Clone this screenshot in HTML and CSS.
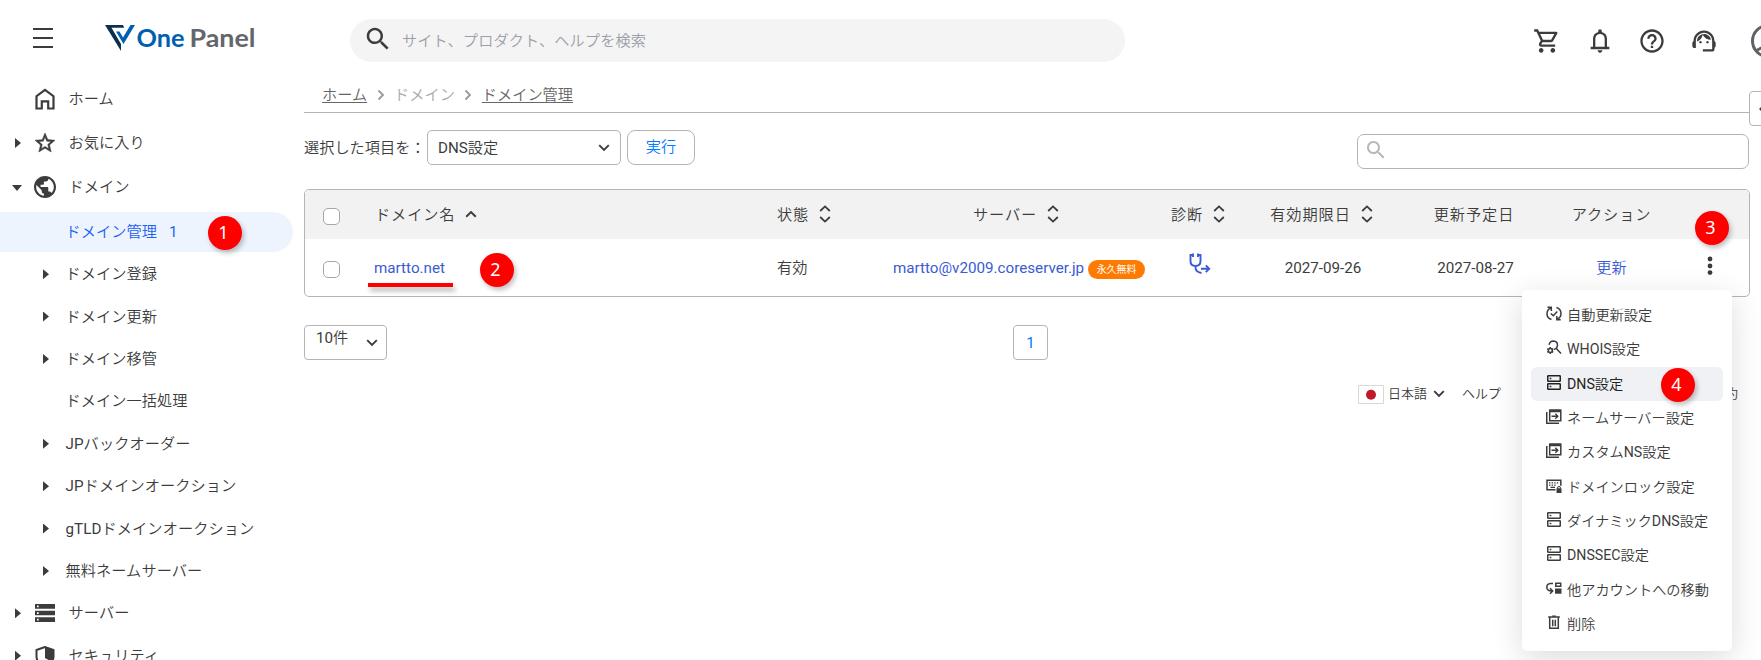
FILE: index.html
```html
<!DOCTYPE html>
<html lang="ja">
<head>
<meta charset="utf-8">
<title>One Panel</title>
<link rel="stylesheet" href="styles.css">
</head>
<body>
<svg class="defs" width="0" height="0">
  <symbol id="search" viewBox="0 0 24 24"><path d="M15.5 14h-.79l-.28-.27C15.41 12.59 16 11.11 16 9.5 16 5.91 13.09 3 9.5 3S3 5.91 3 9.5 5.91 16 9.5 16c1.61 0 3.09-.59 4.23-1.57l.27.28v.79l5 4.99L20.49 19l-4.99-5zm-6 0C7.01 14 5 11.99 5 9.5S7.01 5 9.5 5 14 7.01 14 9.5 11.99 14 9.5 14z"/></symbol>
  <symbol id="down" viewBox="0 0 12 8"><path d="M1.2 1.2 6 6l4.800-4.800" fill="none" stroke="currentColor" stroke-width="1.900"/></symbol>
  <symbol id="sort" viewBox="0 0 12 18"><path d="M1.200 6 6 1.400 10.800 6M1.200 12 6 16.600 10.800 12" fill="none" stroke="currentColor" stroke-width="1.800"/></symbol>
  <symbol id="server" viewBox="0 0 15 15"><g fill="none" stroke="currentColor" stroke-width="1.500"><rect x="1.250" y=".75" width="12.500" height="5.500" rx=".6"/><rect x="1.250" y="8.750" width="12.500" height="5.500" rx=".6"/></g><path d="M3.200 2.800h1.600v1.500H3.200zM3.200 10.800h1.600v1.500H3.200z"/></symbol>
  <symbol id="enter" viewBox="0 0 16 15"><path d="M3.700 1.200h11.100v10.500H3.700z" fill="none" stroke="currentColor" stroke-width="1.500"/><path d="M3.500.5H15v2.700H3.500zM0 3h1.500v10.500H13V15H0z"/><path d="M5.500 7.200h6M9.300 4.700l2.500 2.500-2.500 2.500" fill="none" stroke="currentColor" stroke-width="1.400"/></symbol>
</svg>

<header class="topbar">
  <div class="burger"><i></i><i></i><i></i></div>
  <svg class="logo" width="154" height="30" viewBox="0 0 154 30">
    <path d="M1 1h18l1.200 2.800H7.500L17 20v7z" fill="#0b2f50"/>
    <path d="M12 7.500h3.500l3.500 6L26.500 1H31L19.500 20z" fill="#0060b0"/>
    <text x="32.500" y="22.500" textLength="48" lengthAdjust="spacingAndGlyphs" fill="#0060b0">One</text>
    <text x="85.500" y="22.500" textLength="66" lengthAdjust="spacingAndGlyphs" fill="#63666a">Panel</text>
  </svg>
  <div class="global-search"><svg width="30" height="30"><use href="#search"/></svg><span>サイト、プロダクト、ヘルプを検索</span></div>
  <div class="tools">
    <svg viewBox="0 0 24 24"><path d="M15.55 13c.75 0 1.410-.41 1.750-1.030l3.580-6.490c.37-.66-.11-1.480-.87-1.480H5.210l-.94-2H1v2h2l3.600 7.590-1.350 2.440C4.520 15.370 5.480 17 7 17h12v-2H7l1.100-2h7.450zM6.160 6h12.150l-2.760 5H8.530L6.160 6zM7 18c-1.100 0-1.990.9-1.990 2S5.900 22 7 22s2-.9 2-2-.9-2-2-2zm10 0c-1.100 0-1.990.9-1.990 2s.89 2 1.990 2 2-.9 2-2-.9-2-2-2z"/></svg>
    <svg viewBox="0 -960 960 960"><path d="M160-200v-80h80v-280q0-83 50-147.500T420-792v-28q0-25 17.500-42.500T480-880q25 0 42.500 17.500T540-820v28q80 20 130 84.500T720-560v280h80v80H160Zm320 120q-33 0-56.500-23.500T400-160h160q0 33-23.500 56.500T480-80ZM320-280h320v-280q0-66-47-113t-113-47q-66 0-113 47t-47 113v280Z"/></svg>
    <svg viewBox="0 0 24 24"><path d="M11 18h2v-2h-2v2zm1-16C6.480 2 2 6.480 2 12s4.480 10 10 10 10-4.480 10-10S17.520 2 12 2zm0 18c-4.410 0-8-3.590-8-8s3.590-8 8-8 8 3.590 8 8-3.590 8-8 8zm0-14c-2.210 0-4 1.790-4 4h2c0-1.100.9-2 2-2s2 .9 2 2c0 2-3 1.750-3 5h2c0-2.250 3-2.500 3-5 0-2.210-1.790-4-4-4z"/></svg>
    <svg viewBox="0 0 24 24"><path d="M21 12.220C21 6.730 16.740 3 12 3c-4.690 0-9 3.650-9 9.280-.6.340-1 .980-1 1.720v2c0 1.100.9 2 2 2h1v-6.100c0-3.870 3.130-7 7-7s7 3.130 7 7V19h-8v2h8c1.100 0 2-.9 2-2v-1.220c.590-.310 1-.920 1-1.640v-2.300c0-.7-.410-1.310-1-1.620z"/><circle cx="9" cy="13" r="1"/><circle cx="15" cy="13" r="1"/><path d="M18 11.030C17.520 8.180 15.040 6 12.050 6c-3.030 0-6.290 2.510-6.030 6.450 2.470-1.010 4.330-3.210 4.860-5.890 1.310 2.630 4 4.440 7.120 4.470z"/></svg>
    <svg class="user line" viewBox="0 0 36 36"><circle cx="18" cy="18" r="15.500"/><circle cx="18" cy="14" r="5"/><path d="M6 28q12-9 24 0"/></svg>
  </div>
</header>

<div class="body">
  <nav class="side">
    <div class="top"><b></b><svg viewBox="0 0 22 22"><path d="M2.500 20.500V8.200L11 1.800l8.500 6.400v12.300h-5.300v-7.200H7.800v7.200z" fill="none" stroke="currentColor" stroke-width="2.200"/></svg><span>ホーム</span></div>
    <div class="top"><b class="tri"></b><svg viewBox="1 1 22 22"><path stroke="currentColor" stroke-width=".5" d="M22 9.240l-7.190-.62L12 2 9.190 8.630 2 9.240l5.460 4.730L5.820 21 12 17.270 18.180 21l-1.630-7.030L22 9.240zM12 15.400l-3.760 2.270 1-4.280-3.320-2.880 4.380-.38L12 6.100l1.710 4.040 4.380.38-3.320 2.880 1 4.280L12 15.400z"/></svg><span>お気に入り</span></div>
    <div class="top"><b class="tri open"></b><svg viewBox="2 2 20 20"><path d="M12 2C6.480 2 2 6.480 2 12s4.480 10 10 10 10-4.480 10-10S17.520 2 12 2zm-1 17.930c-3.950-.49-7-3.850-7-7.930 0-.62.08-1.210.21-1.790L9 15v1c0 1.100.9 2 2 2v1.930zm6.900-2.540c-.26-.81-1-1.390-1.900-1.390h-1v-3c0-.55-.45-1-1-1H8v-2h2c.55 0 1-.45 1-1V7h2c1.100 0 2-.9 2-2v-.41c2.930 1.190 5 4.060 5 7.410 0 2.080-.8 3.970-2.100 5.390z"/></svg><span>ドメイン</span></div>
    <div class="sub active"><b></b><span>ドメイン管理</span><em>1</em></div>
    <div class="sub"><b class="tri"></b><span>ドメイン登録</span></div>
    <div class="sub"><b class="tri"></b><span>ドメイン更新</span></div>
    <div class="sub"><b class="tri"></b><span>ドメイン移管</span></div>
    <div class="sub"><b></b><span>ドメイン一括処理</span></div>
    <div class="sub"><b class="tri"></b><span>JPバックオーダー</span></div>
    <div class="sub"><b class="tri"></b><span>JPドメインオークション</span></div>
    <div class="sub"><b class="tri"></b><span>gTLDドメインオークション</span></div>
    <div class="sub"><b class="tri"></b><span>無料ネームサーバー</span></div>
    <div class="top low"><b class="tri"></b><svg viewBox="0 0 22 22"><path fill-rule="evenodd" d="M1 2h20v4.700H1zM1 8.800h20v4.500H1zM1 15.300h20V20H1zM3 3.500v1.700h1.700V3.500zM3 10.200v1.700h1.700v-1.700zM3 16.800v1.700h1.700v-1.700z"/></svg><span>サーバー</span></div>
    <div class="top low"><b class="tri"></b><svg viewBox="0 0 22 22"><path d="M11 2 2.500 5v6.500q0 6.500 8.500 9.500 8.500-3 8.500-9.500V5z" fill="none" stroke="currentColor" stroke-width="2"/><path d="M11 1.500l8 3v13L11 13z"/></svg><span>セキュリティ</span></div>
  </nav>

  <main class="main">
    <div class="crumbs"><u>ホーム</u><svg width="8" height="12" viewBox="0 0 8 12"><path d="M1.500 1.500 6 6l-4.500 4.500"/></svg><span>ドメイン</span><svg width="8" height="12" viewBox="0 0 8 12"><path d="M1.500 1.500 6 6l-4.500 4.500"/></svg><u>ドメイン管理</u></div>
    <div class="filters">
      <label>選択した項目を：</label>
      <div class="select">DNS設定<svg width="12" height="8"><use href="#down"/></svg></div>
      <div class="run">実行</div>
      <div class="find"><svg width="24" height="24"><use href="#search"/></svg></div>
    </div>

    <section class="table">
      <div class="row head">
        <i class="check"></i>
        <div class="name">ドメイン名<svg width="12" height="8" viewBox="0 0 12 8"><path d="M1.200 6.700 6 2l4.800 4.700" fill="none" stroke="currentColor" stroke-width="1.900"/></svg></div>
        <div>状態<svg width="12" height="18"><use href="#sort"/></svg></div>
        <div class="mid">サーバー<svg width="12" height="18"><use href="#sort"/></svg></div>
        <div class="mid">診断<svg width="12" height="18"><use href="#sort"/></svg></div>
        <div class="mid">有効期限日<svg width="12" height="18"><use href="#sort"/></svg></div>
        <div class="mid">更新予定日</div>
        <div class="mid">アクション</div>
      </div>
      <div class="row data">
        <i class="check"></i>
        <div class="link">martto.net</div>
        <div>有効</div>
        <div class="mid link server">martto@v2009.coreserver.jp<span class="free">永久無料</span></div>
        <div class="mid link"><svg class="steth line" width="22" height="22" viewBox="0 0 22 22"><path d="M4 2H1.500v6q0 5 5 5t5-5V2H9M4 .5v3.500M9 .5v3.500M6.500 13v1.500q0 4.500 6 5.500M12 15.700h8M16.800 12.300l3.400 3.400-3.400 3.400"/></svg></div>
        <div class="mid date">2027-09-26</div>
        <div class="mid date">2027-08-27</div>
        <div class="mid link">更新</div>
        <div class="mid dots"><svg width="6" height="20" viewBox="0 0 6 20"><circle cx="3" cy="3" r="2.400"/><circle cx="3" cy="10" r="2.400"/><circle cx="3" cy="16.600" r="2.400"/></svg></div>
      </div>
    </section>

    <div class="paging"><div class="size">10件<svg width="12" height="8"><use href="#down"/></svg></div><div class="page">1</div></div>
    <footer class="foot">
      <svg width="26" height="19" viewBox="0 0 26 19"><path d="M.5.5h25v18H.5z" fill="#fff" stroke="#d8d8d8"/><circle cx="13" cy="9.700" r="5" fill="#c1182c"/></svg>
      <span class="lang">日本語</span><svg width="12" height="8"><use href="#down"/></svg><span class="help">ヘルプ</span><span class="terms">利用規約</span>
    </footer>
  </main>
</div>

<div class="drawer"><svg width="8" height="12" viewBox="0 0 8 12"><path d="M6 1.500 1.500 6 6 10.500" fill="none" stroke="currentColor" stroke-width="2"/></svg></div>

<div class="menu">
  <div><svg class="line" viewBox="0 0 16 15"><path d="M5.500 13.500Q.8 12 1 7.500 1.200 3.500 4.600 2M1.500 1.300h3.800v3.800M10.500 1.500Q15 3 15 7.500 15 11.500 11.400 13M14.700 13.700h-3.900V9.900M4.800 7.500l2.500 2.300 4-4.200"/></svg>自動更新設定</div>
  <div><svg class="line" viewBox="0 0 16 15"><path d="M3 4.800Q4 1 7.500 1q4 .2 4 4.200 0 1.800-1.400 3L15 13.500M8 9.200h1.500"/><circle cx="4.300" cy="10.500" r="2"/><path d="M4.300 7v1.500M4.300 12.500V14M1.300 8.700l1.200.8M6 11.500l1.300.8M1.300 12.300l1.200-.8M6 9.500l1.300-.8"/></svg>WHOIS設定</div>
  <div class="on"><svg><use href="#server"/></svg>DNS設定</div>
  <div><svg><use href="#enter"/></svg>ネームサーバー設定</div>
  <div><svg><use href="#enter"/></svg>カスタムNS設定</div>
  <div><svg viewBox="0 0 16 15"><path d="M9.500 11.700H1V2.200h13.800v5.500" fill="none" stroke="currentColor" stroke-width="1.500"/><path d="M3 4.200h1.400v1.300H3zM5.600 4.200H7v1.300H5.600zM8.200 4.200h1.400v1.300H8.200zM10.800 4.200h1.400v1.300h-1.400zM3 6.500h1.400v1.300H3zM5.600 6.500H7v1.300H5.600zM8.200 6.500h1.400v1.300H8.200zM4.500 8.800h4.500v1.300H4.500zM10.500 10.200h5V15h-5z"/><path d="M11.700 10.500V9q1.300-1.300 2.600 0v1.500" fill="none" stroke="currentColor"/></svg>ドメインロック設定</div>
  <div><svg><use href="#server"/></svg>ダイナミックDNS設定</div>
  <div><svg><use href="#server"/></svg>DNSSEC設定</div>
  <div><svg viewBox="0 0 16 15"><path d="M7 2.500H4.500Q.8 2.800.8 6.200q0 3.500 5 3.800M4 7.300 6.700 10 4 12.700M9.800 2.300h4.900v3H9.800z" fill="none" stroke="currentColor" stroke-width="1.500"/><path d="M9 7.500h6.500v5.200H9z"/></svg>他アカウントへの移動</div>
  <div><svg viewBox="0 0 16 15"><path d="M3.700 2.500v10.700h8.600V2.500M2.200 2h11.600M6.700 4.700v6.500M9.300 4.700v6.500" fill="none" stroke="currentColor" stroke-width="1.500"/><path d="M6 .5h4v1.300H6z"/></svg>削除</div>
</div>

<i class="underline"></i>
<span class="pin one">1</span>
<span class="pin two">2</span>
<span class="pin three">3</span>
<span class="pin four">4</span>
</body>
</html>
```

FILE: styles.css
```css
* { box-sizing: border-box; }
html, body { height: 660px; overflow: hidden; }
body { margin: 0; position: relative; background: #fff; color: #3c3c3c; font: 400 15.2px/20px Roboto, "Noto Sans CJK JP DemiLight", "Noto Sans CJK JP", sans-serif; white-space: nowrap; }
svg { display: block; flex: none; fill: currentColor; }
svg.line { fill: none; stroke: currentColor; stroke-width: 1.5; }
.defs { position: absolute; }

.topbar { height: 80px; display: flex; align-items: flex-start; padding-left: 33px; }
.topbar > * { flex: none; }
.burger { width: 20px; padding-top: 28px; display: grid; gap: 7px; }
.burger i { height: 2px; background: #3c3c3c; }
.logo { margin: 24px 0 0 51px; font: 700 24px Lato, sans-serif; }
.global-search { margin: 19px 0 0 92px; width: 775px; height: 43px; border-radius: 22px; background: #f4f4f4; display: flex; align-items: center; padding-left: 13px; color: #9b9fa8; }
.global-search svg { color: #3c3c3c; margin-top: -3px; }
.global-search span { margin-left: 9px; letter-spacing: .1px; }
.tools { margin: 27px 0 0 408px; display: flex; gap: 24px; }
.tools svg { width: 28px; height: 28px; }
.tools svg:first-child { margin-right: 1px; }
.tools .user { width: 36px; height: 36px; margin: -4px 0 0 8px; color: #5f6368; stroke-width: 3; }

.body { display: flex; align-items: flex-start; }
.side { width: 304px; flex: none; letter-spacing: .08px; }
.side > div { display: flex; align-items: center; }
.top { height: 44px; }
.top:first-child { margin-top: -3px; }
.top b { width: 34px; }
.top svg { width: 22px; height: 22px; }
.top span { margin: 0 0 0 12.500px; }
.low { height: 42.4px; }
.sub { height: 42.4px; }
.sub b { width: 65.5px; }
.sub.active { height: 40px; width: 293px; margin: 3px 0 1px; border-radius: 0 20px 20px 0; background: #edf4fe; color: #2260f5; }
.sub em { font-style: normal; margin-left: 12px; }
.tri::before { content: ""; display: block; width: 6px; height: 10px; margin-left: 15px; background: #3c3c3c; clip-path: polygon(0 0, 100% 50%, 0 100%); }
.sub .tri::before { margin-left: 43px; }
.tri.open::before { width: 10px; height: 6px; margin: 2px 0 0 12px; clip-path: polygon(0 0, 100% 0, 50% 100%); }

.main { width: 1446px; flex: none; }
.crumbs { height: 33px; border-bottom: 1px solid #b7b3b5; padding: 5px 0 0 18px; display: flex; color: #a9a9a9; }
.crumbs svg { margin: 4px 9.500px; fill: none; stroke: #999; stroke-width: 1.8; }
.crumbs span + svg { margin: 4px 10px 4px 9px; }
.crumbs u { color: #666; text-underline-offset: 2px; }
.filters { display: flex; padding-top: 17px; height: 76px; align-items: flex-start; }
.filters label { width: 123px; line-height: 36px; }
.select { width: 194px; height: 35px; border: 1px solid #b7b3b5; border-radius: 5px; display: flex; align-items: center; justify-content: space-between; padding: 0 10px 0 10px; }
.run { width: 68px; height: 35px; margin-left: 6px; border: 1px solid #b7b3b5; border-radius: 8px; text-align: center; line-height: 33px; color: #007bff; }
.find { width: 392px; height: 35px; margin: 4px 1px 0 auto; border: 1px solid #b7b3b5; border-radius: 7px; padding: 3px 0 0 6px; color: #b7b7b7; }
.table { height: 108px; border: 1px solid #b7b3b5; border-radius: 5px; overflow: hidden; }
.row { display: grid; grid-template-columns: 69px 403px 108px 262px 102px 145px 160px 115px 80px; align-items: center; }
.row > div { display: flex; align-items: center; }
.row > .mid { justify-content: center; }
.head { height: 49px; background: #f2f2f2; letter-spacing: .9px; }
.head svg { margin: -2px 0 0 10px; }
.head .name { padding-left: 1px; }
.data { height: 57px; }
.check { width: 17px; height: 17px; margin: 4px 0 0 18px; border: 1px solid #aaa6a8; border-radius: 5px; background: #fff; }
.link { color: #3a5bd2; }
.row > .server { padding-left: 6px; }
.row > .date { padding-left: 3px; }
.free { height: 19px; margin: 3px 0 0 4px; padding: 0 8.5px; border-radius: 10px; background: #ff7a00; color: #fff; font: 400 10px/18px "Noto Sans CJK JP", sans-serif; }
svg.steth { margin: -7px 0 0 4px; stroke-width: 1.9; }
.dots { padding: 0 0 3px 1px; }
.paging { display: flex; padding-top: 28px; }
.size { width: 83px; height: 35px; border: 1px solid #b7b3b5; border-radius: 4px; padding: 2px 8px 0 11px; display: flex; justify-content: space-between; }
.size svg { margin-top: 11px; }
.page { width: 35px; height: 35px; margin-left: 626px; border: 1px solid #b7b3b5; border-radius: 4px; color: #007bff; text-align: center; line-height: 34px; }
.foot { display: flex; align-items: center; margin-top: 24px; padding-left: 1054px; font-size: 13px; height: 20px; }
.lang { margin: 0 6px 0 4px; }
.help { margin-left: 17px; }
.terms { margin: 0 12px 0 auto; }

.drawer { position: absolute; left: 1749px; top: 91px; width: 35px; height: 35px; border: 1px solid #b7b3b5; border-radius: 4px; background: #fff; padding: 11px 9px; }
.menu { position: absolute; left: 1522px; top: 290px; width: 210px; height: 361px; padding: 8px 9px; border-radius: 5px; background: #fff; box-shadow: 0 8px 32px rgba(0,0,0,.14); font-size: 14.2px; }
.menu div { height: 34.3px; padding-left: 14.500px; display: flex; align-items: center; border-radius: 6px; }
.menu svg { width: 16px; height: 15px; margin: -3px 5.500px 0 0; }
.menu .on { background: #f0f1f5; color: #222; }

.underline { position: absolute; left: 368px; top: 283px; width: 85px; height: 4px; background: #f00; box-shadow: 2px 4px 5px rgba(0,0,0,.3); }
.pin { position: absolute; width: 34px; height: 34px; padding-right: 3px; border-radius: 50%; background: #f00; color: #fff; box-shadow: 2px 3px 5px rgba(0,0,0,.25); font: 400 18px/32px "Noto Sans", sans-serif; text-align: center; }
.one { left: 208px; top: 216px; }
.two { left: 480px; top: 253px; }
.three { left: 1695px; top: 211px; }
.four { left: 1661px; top: 368px; }
```
